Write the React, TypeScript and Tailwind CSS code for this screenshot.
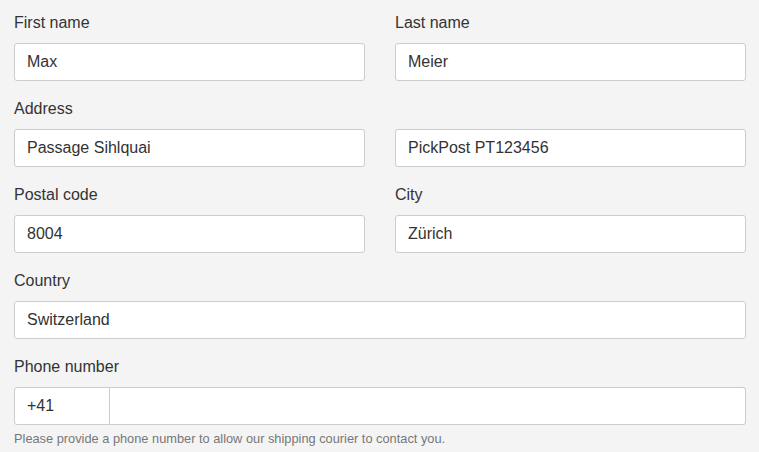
import React from "react";

const inputCls =
  "w-full h-[38px] bg-white border border-[#cccccc] rounded-[3px] px-[12px] text-[16px] text-[#333] outline-none";

const labelCls = "h-[24px] leading-[26px] text-[16px] text-[#333] mb-[9px]";

const Field = ({ label, value }: { label?: string; value: string }) => (
  <div className="flex flex-col">
    <label className={labelCls}>{label ?? "\u00a0"}</label>
    <input className={inputCls} defaultValue={value} />
  </div>
);

export default function App() {
  return (
    <div
      className="min-h-screen bg-[#f4f4f4] px-[14px] pt-[10px] pr-[13px]"
      style={{ fontFamily: '"Liberation Sans", Arial, sans-serif' }}
    >
      <div className="grid grid-cols-2 gap-x-[30px] gap-y-[15px]">
        <Field label="First name" value="Max" />
        <Field label="Last name" value="Meier" />
        <Field label="Address" value="Passage Sihlquai" />
        <Field value="PickPost PT123456" />
        <Field label="Postal code" value="8004" />
        <Field label="City" value="Zürich" />
        <div className="col-span-2">
          <Field label="Country" value="Switzerland" />
        </div>
        <div className="col-span-2 flex flex-col">
          <label className={labelCls}>Phone number</label>
          <div className="flex">
            <input
              className="w-[96px] h-[38px] bg-white border border-[#cccccc] rounded-l-[3px] px-[12px] text-[16px] text-[#333] outline-none"
              defaultValue="+41"
            />
            <input className="flex-1 h-[38px] bg-white border border-l-0 border-[#cccccc] rounded-r-[3px] px-[12px] text-[16px] text-[#333] outline-none" />
          </div>
          <p className="mt-[5px] text-[12.8px] leading-[18px] text-[#777]">
            Please provide a phone number to allow our shipping courier to contact you.
          </p>
        </div>
      </div>
    </div>
  );
}
